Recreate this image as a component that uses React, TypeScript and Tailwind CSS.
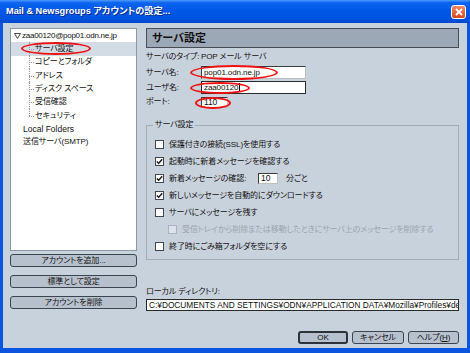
import React from 'react';

function Check({ checked = false, disabled = false }: { checked?: boolean; disabled?: boolean }) {
  return (
    <span
      className={`w-[9px] h-[9px] border shrink-0 flex items-center justify-center ${
        disabled ? 'border-[#aab3bd] bg-[#dde3ea]' : 'border-[#3f4a56] bg-white'
      }`}
    >
      {checked && (
        <svg width="7" height="7" viewBox="0 0 7 7">
          <path d="M0.8 3.4 L2.7 5.3 L6.2 1.2" stroke="#1a1a1a" strokeWidth="1.4" fill="none" />
        </svg>
      )}
    </span>
  );
}

function Btn({ children, w, def = false }: { children: React.ReactNode; w?: string; def?: boolean }) {
  return (
    <div
      className={`h-[13px] ${w ?? 'w-full'} rounded-[3px] bg-[#b7c1cd] flex items-center justify-center text-[#111] whitespace-nowrap ${
        def ? 'border-2 border-[#2c333b]' : 'border border-[#3c444d]'
      }`}
    >
      {children}
    </div>
  );
}

function TreeChild({ label, selected = false, last = false }: { label: string; selected?: boolean; last?: boolean }) {
  return (
    <div className={`flex h-[13.33px] items-center ${selected ? 'bg-[#d3dbe5]' : ''}`}>
      <span className="relative w-[23px] self-stretch shrink-0">
        <span
          className={`absolute left-[18px] top-0 border-l border-dotted border-[#9a9a9a] ${last ? 'h-1/2' : 'h-full'}`}
        />
        <span className="absolute left-[18px] top-1/2 w-[5px] border-t border-dotted border-[#9a9a9a]" />
      </span>
      <span className="pl-[1px]">{label}</span>
    </div>
  );
}

export default function App() {
  return (
    <div className="relative w-[470px] h-[353px] overflow-hidden flex flex-col bg-[#0a55e0] font-['Liberation_Sans','Noto_Sans_CJK_JP',sans-serif] text-[8px] leading-none tracking-[-0.1px] text-[#111] whitespace-nowrap [font-feature-settings:'palt']">
      {/* Title bar */}
      <div className="h-[23px] shrink-0 flex items-center pl-[6px] pr-[4px] bg-[linear-gradient(180deg,#4d9bff_0%,#0c64ef_12%,#0058e8_45%,#0053e0_80%,#0048cc_100%)]">
        <span className="text-white font-bold text-[9.2px] tracking-normal [text-shadow:1px_1px_0_#0a2a8a]">
          Mail &amp; Newsgroups アカウントの設定...
        </span>
        <span className="ml-auto w-[15px] h-[14px] rounded-[3px] border border-white bg-[linear-gradient(180deg,#f08a62,#d9461c)] flex items-center justify-center">
          <svg width="8" height="8" viewBox="0 0 8 8">
            <path d="M1 1 L7 7 M7 1 L1 7" stroke="white" strokeWidth="1.8" />
          </svg>
        </span>
      </div>

      {/* Body */}
      <div className="flex-1 mx-[3px] mb-[5px] bg-[#c8d2dd] flex flex-col pl-[7px] pr-[8px] pt-[5px]">
        <div className="flex gap-[9px] h-[283px]">
          {/* Left column */}
          <div className="w-[127px] flex flex-col">
            <div className="h-[223px] bg-white border border-[#8d99a7]">
              <div className="flex h-[13.33px] items-center pl-[3px]">
                <svg width="7" height="6" viewBox="0 0 7 6" className="shrink-0">
                  <path d="M0.5 0.5 L6.5 0.5 L3.5 5.5 Z" stroke="#333" strokeWidth="0.9" fill="white" />
                </svg>
                <span className="pl-[1px] tracking-[-0.25px]">zaa00120@pop01.odn.ne.jp</span>
              </div>
              <TreeChild label="サーバ設定" selected />
              <TreeChild label="コピーとフォルダ" />
              <TreeChild label="アドレス" />
              <TreeChild label="ディスク スペース" />
              <TreeChild label="受信確認" />
              <TreeChild label="セキュリティ" last />
              <div className="flex h-[13.33px] items-center pl-[12px] text-[8.5px] tracking-normal">Local Folders</div>
              <div className="flex h-[13.33px] items-center pl-[12px]">送信サーバ(SMTP)</div>
            </div>
            <div className="mt-[3px]"><Btn>アカウントを追加...</Btn></div>
            <div className="mt-[8px]"><Btn>標準として設定</Btn></div>
            <div className="mt-[8px]"><Btn>アカウントを削除</Btn></div>
          </div>

          {/* Right column */}
          <div className="w-[313px] flex flex-col">
            <div className="h-[20px] border border-[#464d56] bg-[#9ca8b6] flex items-center pl-[5px]">
              <span className="font-bold text-[11px] tracking-normal">サーバ設定</span>
            </div>
            <div className="mt-[3px] h-[12px] flex items-center">
              <span className="w-[55px]">サーバのタイプ:</span>
              <span>POP メール サーバ</span>
            </div>
            <div className="mt-[3px] h-[13px] flex items-center">
              <span className="w-[55px]">サーバ名:</span>
              <div className="w-[105px] h-[13px] bg-white border border-[#3a3a3a] border-b-[#bfbfbf] border-r-[#bfbfbf] flex items-center pl-[2px]">
                pop01.odn.ne.jp
              </div>
            </div>
            <div className="mt-[2px] h-[13px] flex items-center">
              <span className="w-[55px]">ユーザ名:</span>
              <div className="w-[105px] h-[13px] bg-white border border-[#2a2a2a] flex items-center pl-[2px]">
                zaa00120
                <span className="w-px h-[9px] bg-black ml-[1px]" />
              </div>
            </div>
            <div className="mt-[2px] h-[12px] flex items-center">
              <span className="w-[55px]">ポート:</span>
              <div className="w-[27px] h-[11px] bg-white border border-[#3a3a3a] border-b-[#bfbfbf] border-r-[#bfbfbf] flex items-center pl-[2px] text-[8.5px]">
                110
              </div>
            </div>

            {/* Group box */}
            <div className="relative mt-[17px] h-[135px] border border-[#a3adb9] pl-[8px] pt-[10px] pr-[4px]">
              <span className="absolute -top-[5px] left-[6px] px-[2px] bg-[#c8d2dd]">サーバ設定</span>
              <div className="h-[17px] flex items-center gap-[5px]">
                <Check />
                <span>保護付きの接続(SSL)を使用する</span>
              </div>
              <div className="h-[17px] flex items-center gap-[5px]">
                <Check checked />
                <span>起動時に新着メッセージを確認する</span>
              </div>
              <div className="h-[17px] flex items-center gap-[5px]">
                <Check checked />
                <span className="w-[84px]">新着メッセージの確認:</span>
                <div className="w-[20px] h-[11px] bg-white border border-[#3a3a3a] border-b-[#bfbfbf] border-r-[#bfbfbf] flex items-center pl-[2px] text-[8.5px]">
                  10
                </div>
                <span className="ml-[3px]">分ごと</span>
              </div>
              <div className="h-[17px] flex items-center gap-[5px]">
                <Check checked />
                <span>新しいメッセージを自動的にダウンロードする</span>
              </div>
              <div className="h-[17px] flex items-center gap-[5px]">
                <Check />
                <span>サーバにメッセージを残す</span>
              </div>
              <div className="h-[17px] flex items-center gap-[5px] pl-[13px]">
                <Check disabled />
                <span className="text-[#9aa4ae]">受信トレイから削除または移動したときにサーバ上のメッセージを削除する</span>
              </div>
              <div className="h-[17px] flex items-center gap-[5px]">
                <Check />
                <span>終了時にごみ箱フォルダを空にする</span>
              </div>
            </div>

            <div className="mt-[26px] h-[12px] flex items-center">ローカル ディレクトリ:</div>
            <div className="mt-[1px] h-[12px] bg-white border border-[#2a2a2a] flex items-center pl-[2px] overflow-hidden text-[8.3px] tracking-normal">
              C:¥DOCUMENTS AND SETTINGS¥ODN¥APPLICATION DATA¥Mozilla¥Profiles¥default
            </div>
          </div>
        </div>

        {/* Bottom buttons */}
        <div className="mt-[20px] flex justify-end gap-[4px]">
          <Btn w="w-[50px]" def>OK</Btn>
          <Btn w="w-[52px]">キャンセル</Btn>
          <Btn w="w-[51px]">
            ヘルプ(<span className="underline">H</span>)
          </Btn>
        </div>
      </div>

      {/* Red annotation ellipses */}
      <span className="absolute left-[21px] top-[42px] w-[70px] h-[13px] rounded-[50%] border-2 border-[#f01010]" />
      <span className="absolute left-[190px] top-[65px] w-[88px] h-[15px] rounded-[50%] border-2 border-[#f01010]" />
      <span className="absolute left-[190px] top-[82px] w-[60px] h-[12px] rounded-[50%] border-2 border-[#f01010]" />
      <span className="absolute left-[195px] top-[97px] w-[36px] h-[12px] rounded-[50%] border-2 border-[#f01010]" />
    </div>
  );
}
